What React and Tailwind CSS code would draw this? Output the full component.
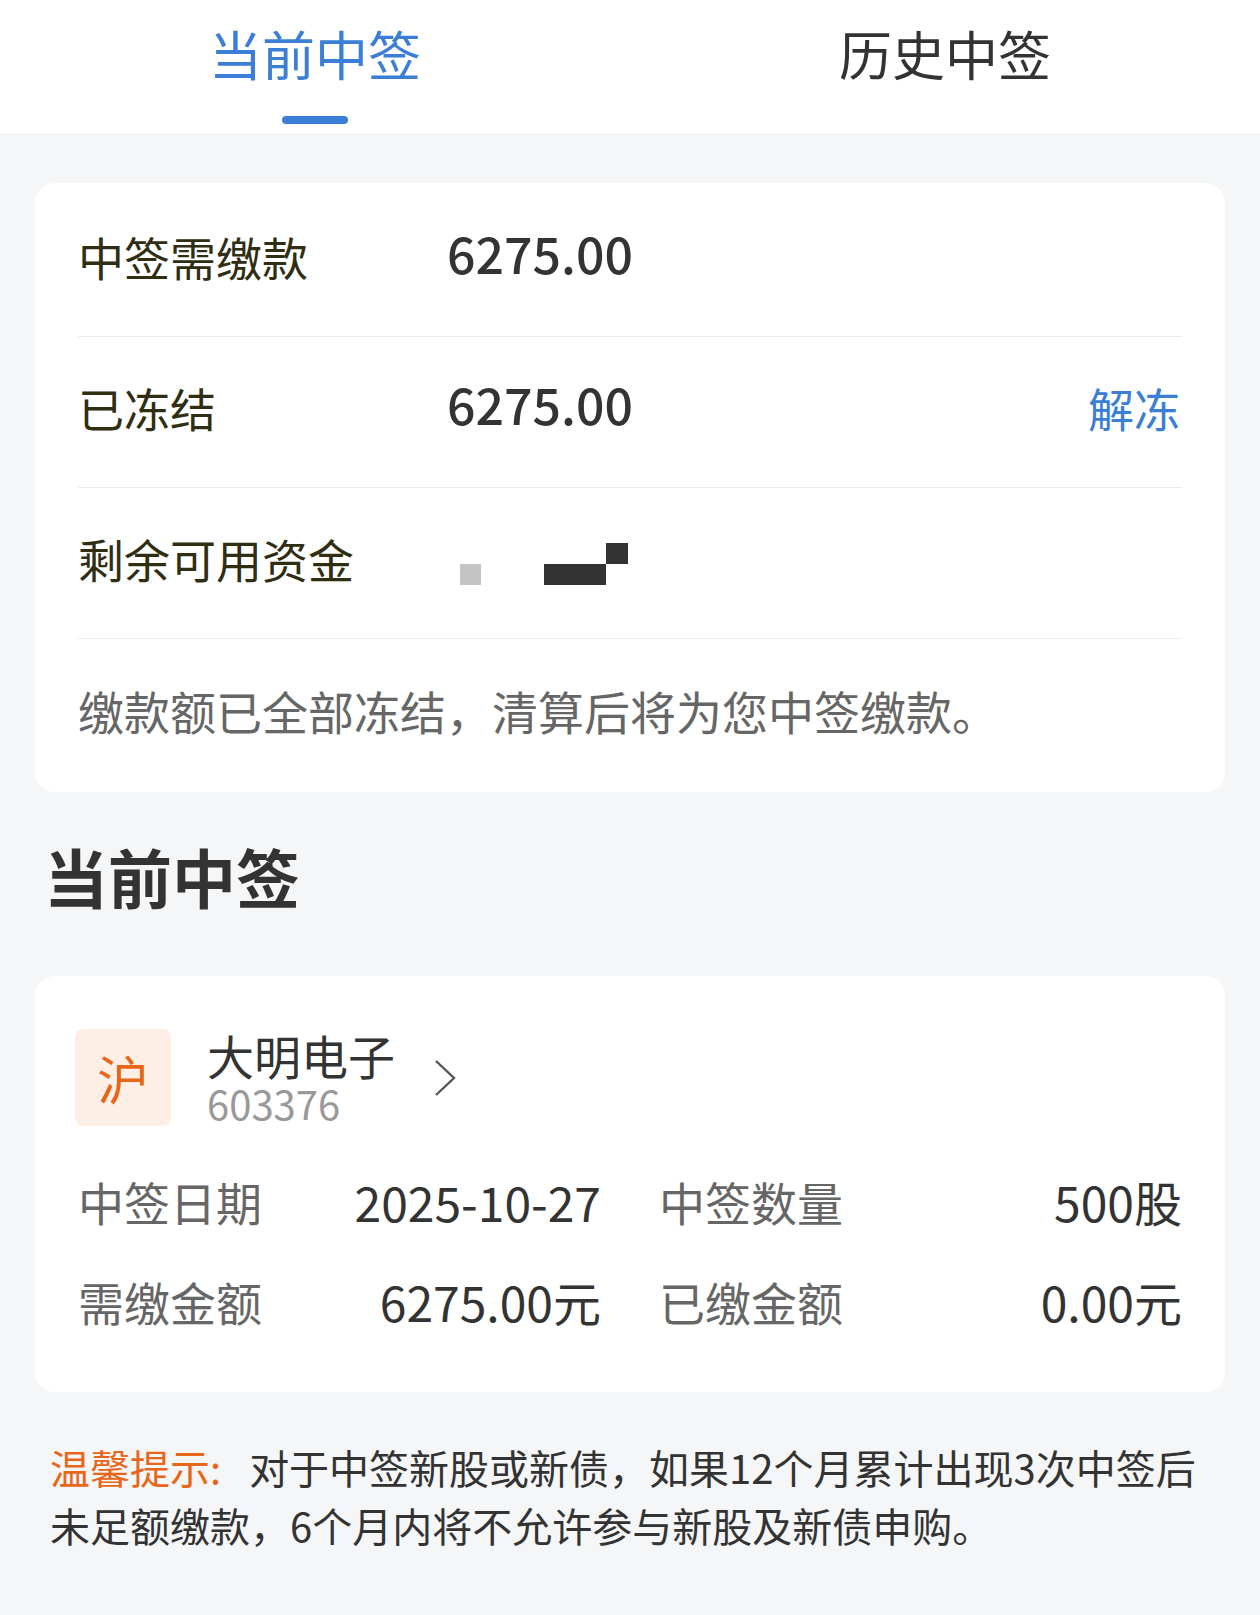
import React from 'react';

const summaryRows = [
  { label: '中签需缴款', value: '6275.00' },
  { label: '已冻结', value: '6275.00', action: '解冻' },
];

const Chevron = () => (
  <svg width="24" height="38" viewBox="0 0 24 38" fill="none" className="ml-[38px] mt-[30px]">
    <polyline points="3,2 21,19 3,36" stroke="#555" strokeWidth="2.4" strokeLinejoin="miter" />
  </svg>
);

const DetailItem = ({ label, value }) => (
  <div className="flex items-center justify-between h-[100px]">
    <span className="text-[46px] text-[#666]">{label}</span>
    <span className="text-[48px] text-[#333]">{value}</span>
  </div>
);

export default function App() {
  return (
    <div className="w-[1260px] min-h-[1615px] bg-[#f5f6f8] font-['Noto_Sans_CJK_SC','Noto_Sans',sans-serif]">
      {/* Tabs */}
      <div className="h-[133px] bg-white flex">
        <div className="flex-1 flex flex-col items-center pt-[24px]">
          <span className="text-[53px] leading-[58px] text-[#3a7fd5]">当前中签</span>
          <div className="mt-[34px] w-[66px] h-[8px] rounded-full bg-[#3a7fd5]" />
        </div>
        <div className="flex-1 flex flex-col items-center pt-[24px]">
          <span className="text-[53px] leading-[58px] text-[#333]">历史中签</span>
        </div>
      </div>

      {/* Summary card */}
      <div className="mx-[35px] mt-[50px] bg-white rounded-[20px] px-[43px] pt-[3px] pb-[2px]">
        {summaryRows.map((row) => (
          <div key={row.label} className="flex items-center h-[151px] pb-[10px] border-b border-[#ececec]">
            <span className="w-[369px] text-[46px] text-[#2f2e12]">{row.label}</span>
            <span className="mb-[8px] text-[50px] font-medium text-[#333]">{row.value}</span>
            {row.action && (
              <span className="ml-auto mr-[2px] text-[46px] text-[#3a7fd5]">{row.action}</span>
            )}
          </div>
        ))}
        <div className="flex items-center h-[151px] pb-[10px] border-b border-[#ececec]">
          <span className="w-[369px] text-[46px] text-[#2f2e12]">剩余可用资金</span>
          <div className="flex h-[42px] ml-[13px] mt-[12px]">
            <div className="self-end w-[21px] h-[21px] bg-[#c4c4c4]" />
            <div className="self-end ml-[63px] w-[62px] h-[21px] bg-[#333]" />
            <div className="self-start w-[22px] h-[21px] bg-[#333]" />
          </div>
        </div>
        <div className="flex items-center h-[151px] pb-[8px]">
          <span className="text-[46px] text-[#666]">缴款额已全部冻结，清算后将为您中签缴款。</span>
        </div>
      </div>

      {/* Section title */}
      <h2 className="mt-[52px] ml-[44px] text-[64px] leading-[62px] font-bold text-[#333]">当前中签</h2>

      {/* Allotment card */}
      <div className="mx-[35px] mt-[70px] h-[416px] bg-white rounded-[20px] pl-[40px] pr-[43px] pt-[53px]">
        <div className="flex items-start">
          <div className="w-[96px] h-[97px] rounded-[8px] bg-[#fdefe6] flex items-center justify-center text-[52px] text-[#e8661a]">
            沪
          </div>
          <div className="ml-[36px] flex flex-col">
            <span className="text-[47px] leading-[52px] text-[#333]">大明电子</span>
            <span className="text-[40px] leading-[44px] text-[#999]">603376</span>
          </div>
          <Chevron />
        </div>
        <div className="mt-[25px] pl-[3px] grid grid-cols-2 gap-x-[58px]">
          <DetailItem label="中签日期" value="2025-10-27" />
          <DetailItem label="中签数量" value="500股" />
          <DetailItem label="需缴金额" value="6275.00元" />
          <DetailItem label="已缴金额" value="0.00元" />
        </div>
      </div>

      {/* Tip */}
      <div className="mt-[46px] px-[50px] text-[40px] leading-[58px] text-[#333] whitespace-nowrap">
        <p>
          <span className="text-[#e8661a]">温馨提示:</span>
          <span className="ml-[28px]">对于中签新股或新债，如果12个月累计出现3次中签后</span>
        </p>
        <p>未足额缴款，6个月内将不允许参与新股及新债申购。</p>
      </div>
    </div>
  );
}
